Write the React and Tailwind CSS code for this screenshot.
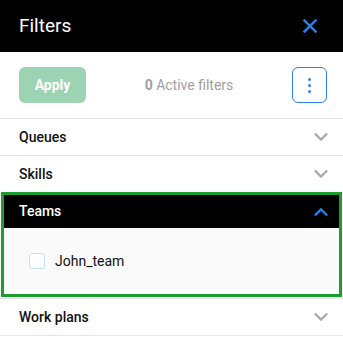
import React from 'react';

const Chevron = ({ up, className }) => (
    <svg width="16" height="16" viewBox="0 0 24 24" fill="none" stroke="currentColor" strokeWidth="3.4" strokeLinecap="square" className={className}>
        <polyline points={up ? '4 16 12 8 20 16' : '4 8 12 16 20 8'} />
    </svg>
);

const Row = ({ label }) => (
    <div className="flex h-[37px] items-center justify-between border-b border-[#e4e4e4] pl-[19px] pr-[14px]">
        <span className="text-[14px] font-medium text-[#111]">{label}</span>
        <Chevron className="text-[#a8a8a8]" />
    </div>
);

export default function App() {
    return (
        <div className="h-[340px] w-[343px] bg-white" style={{ fontFamily: 'Roboto, "Liberation Sans", sans-serif' }}>
            {/* Header */}
            <div className="flex h-[52px] items-center justify-between bg-black pl-[19px] pr-[26px]">
                <span className="text-[19px] text-white">Filters</span>
                <svg width="14" height="14" viewBox="0 0 14 14" stroke="#2f80ed" strokeWidth="2.4" strokeLinecap="square">
                    <line x1="1.5" y1="1.5" x2="12.5" y2="12.5" />
                    <line x1="12.5" y1="1.5" x2="1.5" y2="12.5" />
                </svg>
            </div>

            {/* Toolbar */}
            <div className="flex h-[67px] items-center justify-between border-b border-[#e4e4e4] pl-[19px] pr-[16px]">
                <button type="button" className="h-[36px] w-[67px] rounded-[6px] bg-[#9cd3b2] text-[14px] font-bold text-white">
                    Apply
                </button>
                <span className="text-[14px] text-[#a0a0a0]">
                    <span className="font-bold">0</span> Active filters
                </span>
                <button type="button" className="flex h-[36px] w-[35px] flex-col items-center justify-center gap-[3px] rounded-[6px] border border-[#2f80ed]">
                    <span className="h-[3px] w-[3px] rounded-full bg-[#2f80ed]" />
                    <span className="h-[3px] w-[3px] rounded-full bg-[#2f80ed]" />
                    <span className="h-[3px] w-[3px] rounded-full bg-[#2f80ed]" />
                </button>
            </div>

            <Row label="Queues" />
            <div className="flex h-[36px] items-center justify-between pl-[19px] pr-[14px]">
                <span className="text-[14px] font-medium text-[#111]">Skills</span>
                <Chevron className="text-[#a8a8a8]" />
            </div>

            {/* Teams (expanded) */}
            <div className="mx-px border-[3px] border-[#1e9c2e]">
                <div className="flex h-[33px] items-center justify-between bg-black pl-[15px] pr-[10px]">
                    <span className="text-[14px] font-medium text-white">Teams</span>
                    <Chevron up className="text-[#2f80ed]" />
                </div>
                <div className="flex h-[66px] items-center gap-[10px] bg-[#fafafa] pl-[25px]">
                    <span className="h-[16px] w-[16px] rounded-[3px] border border-[#c3e1ee] bg-white" />
                    <span className="text-[14px] text-[#111]">John_team</span>
                </div>
            </div>

            <div className="mt-px border-t border-[#e4e4e4]">
                <Row label="Work plans" />
            </div>
        </div>
    );
}
